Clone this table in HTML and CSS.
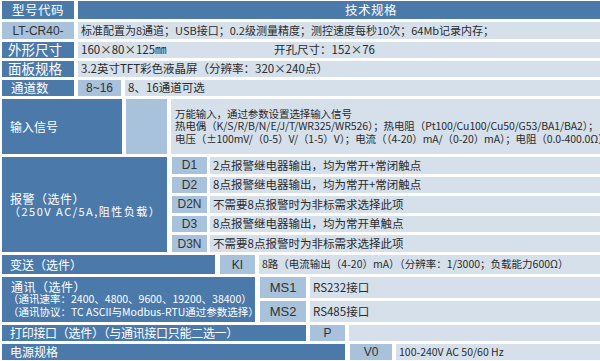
FILE: index.html
```html
<!DOCTYPE html>
<html lang="zh">
<head>
<meta charset="utf-8">
<link rel="stylesheet" href="styles.css">
</head>
<body>
<div class="table">
  <div class="row r-head">
    <div class="lab center">型号代码</div>
    <div class="hdr">技术规格</div>
  </div>
  <div class="row r-17">
    <div class="code w72">LT-CR40-</div>
    <div class="cell first">标准配置为8通道；USB接口；0.2级测量精度；测控速度每秒10次；64Mb记录内存；</div>
  </div>
  <div class="row r-16">
    <div class="lab big w72">外形尺寸</div>
    <div class="cell split"><span class="size">160×80×125㎜</span><span>开孔尺寸：152×76</span></div>
  </div>
  <div class="row r-16">
    <div class="lab big w72">面板规格</div>
    <div class="cell panel">3.2英寸TFT彩色液晶屏（分辨率：320×240点）</div>
  </div>
  <div class="row r-16">
    <div class="lab mid w72">通道数</div>
    <div class="code w43">8~16</div>
    <div class="cell">8、16通道可选</div>
  </div>
  <div class="row r-input">
    <div class="lab w120">输入信号</div>
    <div class="code w41"></div>
    <div class="cell lines">
      <div>万能输入，通过参数设置选择输入信号</div>
      <div>热电偶（K/S/R/B/N/E/J/T/WR325/WR526）；热电阻（Pt100/Cu100/Cu50/G53/BA1/BA2）；</div>
      <div>电压（±100mV/（0-5）V/（1-5）V）；电流（（4-20）mA/（0-20）mA）；电阻（0.0-400.0Ω）</div>
    </div>
  </div>
  <div class="row r-alarm">
    <div class="lab w165 stack alarm">
      <div>报警（选件）</div>
      <div class="sub">（250V AC/5A,阻性负载）</div>
    </div>
    <div class="subgrid g35">
      <div class="code">D1</div><div class="cell">2点报警继电器输出，均为常开+常闭触点</div>
      <div class="code">D2</div><div class="cell">8点报警继电器输出，均为常开+常闭触点</div>
      <div class="code">D2N</div><div class="cell">不需要8点报警时为非标需求选择此项</div>
      <div class="code">D3</div><div class="cell">8点报警继电器输出，均为常开单触点</div>
      <div class="code">D3N</div><div class="cell">不需要8点报警时为非标需求选择此项</div>
    </div>
  </div>
  <div class="row r-19">
    <div class="lab w213">变送（选件）</div>
    <div class="code w35">KI</div>
    <div class="cell sm">8路（电流输出（4-20）mA）（分辨率：1/3000；负载能力600Ω）</div>
  </div>
  <div class="row r-comm">
    <div class="lab w253 stack comm">
      <div>通讯（选件）</div>
      <div class="sub">（通讯速率：2400、4800、9600、19200、38400）</div>
      <div class="sub">（通讯协议：TC ASCII与Modbus-RTU通过参数选择）</div>
    </div>
    <div class="subgrid g46 two">
      <div class="code">MS1</div><div class="cell">RS232接口</div>
      <div class="code">MS2</div><div class="cell">RS485接口</div>
    </div>
  </div>
  <div class="row r-16">
    <div class="lab w304 print">打印接口（选件）（与通讯接口只能二选一）</div>
    <div class="code w35">P</div>
    <div class="cell"></div>
  </div>
  <div class="row r-16">
    <div class="lab w343">电源规格</div>
    <div class="code w42">V0</div>
    <div class="cell sm">100-240V AC 50/60 Hz</div>
  </div>
</div>
</body>
</html>
```
FILE: styles.css
```css
html, body {
  margin: 0;
  padding: 0;
  background: #ffffff;
  overflow: hidden;
}
body {
  width: 600px;
  height: 361px;
  font-family: "Noto Sans CJK SC", "Noto Sans", sans-serif;
}
.table {
  width: 662px;
  margin: 1px 0 0 2px;
  display: flex;
  flex-direction: column;
  gap: 3px;
}
.row {
  display: flex;
  gap: 4px;
}
.r-head { height: 18px; }
.r-17 { height: 17px; }
.r-16 { height: 16px; }
.r-19 { height: 19px; }
.r-input { height: 55px; }
.r-alarm { height: 95px; gap: 5px; }
.r-comm { height: 45px; gap: 5px; }

.lab {
  background: #4b7aaa;
  color: #ffffff;
  font-size: 12px;
  display: flex;
  align-items: center;
  padding-left: 8px;
  box-sizing: border-box;
  flex: none;
  white-space: nowrap;
  line-height: 1;
}
.lab.center { justify-content: center; padding-left: 0; width: 72px; font-size: 12.5px; letter-spacing: 0.5px; }
.lab.big { font-size: 13.5px; padding-left: 6px; }
.lab.mid { font-size: 12.5px; padding-left: 9px; }
.lab.print { letter-spacing: -0.3px; }
.hdr {
  flex: 1;
  background: #4b7aaa;
  color: #ffffff;
  font-size: 12.5px;
  letter-spacing: 0.5px;
  display: flex;
  align-items: center;
  justify-content: center;
  line-height: 1;
}
.code {
  background: #a8c2db;
  color: #333333;
  font-size: 12px;
  display: flex;
  align-items: center;
  justify-content: center;
  flex: none;
  line-height: 1;
  font-family: "Liberation Sans", "Noto Sans CJK SC", sans-serif;
}
.cell {
  flex: 1;
  background: #d5e0eb;
  color: #2b2b2b;
  font-size: 11.5px;
  display: flex;
  align-items: center;
  padding-left: 3px;
  white-space: nowrap;
  overflow: hidden;
  line-height: 1;
  min-width: 0;
}
.cell.first { font-size: 11px; }
.cell.panel { font-size: 11.5px; }
.cell.sm { font-size: 10.5px; }
.cell.split .size { width: 193px; flex: none; }
.cell.lines {
  flex-direction: column;
  align-items: flex-start;
  justify-content: center;
  font-size: 10.5px;
  line-height: 12.5px;
  padding-left: 4px;
  letter-spacing: -0.1px;
}

.w72 { width: 72px; }
.w43 { width: 43px; }
.w41 { width: 41px; }
.w35 { width: 35px; }
.w42 { width: 42px; }
.w120 { width: 120px; }
.w165 { width: 165px; }
.w213 { width: 213px; }
.w253 { width: 253px; }
.w304 { width: 304px; }
.w343 { width: 343px; }

.r-19 .code { margin-left: 1px; }
.r-16 .w42 { margin-left: 1px; }

.stack {
  flex-direction: column;
  align-items: flex-start;
  justify-content: center;
}
.stack.alarm { line-height: 13px; padding-left: 8px; }
.stack.alarm .sub { font-size: 11px; letter-spacing: 1.5px; margin-left: -1px; }
.stack.alarm > div:first-child { letter-spacing: 0.5px; }
.stack.comm { line-height: 12.5px; padding-left: 9px; }
.stack.comm > div:first-child { letter-spacing: 0.5px; }
.stack.comm .sub { font-size: 10.5px; letter-spacing: 0; margin-left: -3px; }

.subgrid {
  flex: 1;
  display: grid;
  grid-template-rows: repeat(5, 1fr);
  row-gap: 3px;
  column-gap: 3px;
  min-width: 0;
}
.subgrid.g35 { grid-template-columns: 35px 1fr; }
.subgrid.g35 .cell { font-size: 11.5px; }
.subgrid.g46 { grid-template-columns: 46px 1fr; column-gap: 4px; }
.subgrid.two { grid-template-rows: repeat(2, 1fr); }
.subgrid.two .code { font-size: 13px; }
.subgrid.two .cell { font-size: 11.5px; }
```
